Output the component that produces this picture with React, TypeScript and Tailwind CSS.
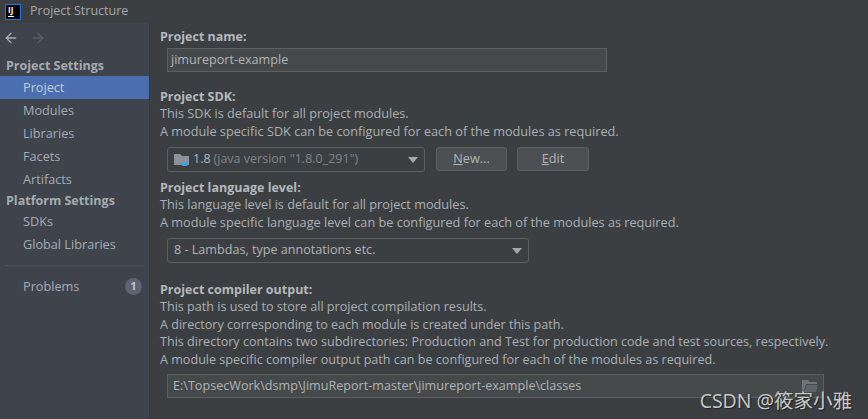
import { ArrowLeft, ArrowRight } from 'lucide-react';

const font = { fontFamily: '"Open Sans", "Noto Sans CJK SC", sans-serif' };

function NavItem({ label, active }: { label: string; active?: boolean }) {
  return (
    <div className={`h-[23px] pl-[23px] flex items-center text-[12.7px] leading-none ${active ? 'bg-[#4b6eaf] text-[#c4ccd6]' : 'text-[#a4acb5]'}`}>
      {label}
    </div>
  );
}

function Heading({ children }: { children: string }) {
  return <div className="h-[17px] leading-[17px] text-[12.5px] font-bold text-[#b4b8bc]">{children}</div>;
}

function Line({ children }: { children: string }) {
  return <div className="h-[17.5px] leading-[17.5px] text-[12.7px] text-[#a9b0b6] whitespace-nowrap">{children}</div>;
}

function SmallLine({ children }: { children: string }) {
  return <div className="h-[17.5px] leading-[17.5px] text-[12.58px] text-[#a9b0b6] whitespace-nowrap">{children}</div>;
}

function Caret() {
  return <div className="w-0 h-0 border-x-[5px] border-x-transparent border-t-[6px] border-t-[#a5a8aa]" />;
}

export default function App() {
  return (
    <div style={font} className="w-[868px] h-[419px] overflow-hidden bg-[#3c3f41] flex flex-col relative">
      {/* Title bar */}
      <div className="h-[23px] shrink-0 flex items-center pl-[5px] gap-[9px]">
        <div className="w-[16px] h-[16px] bg-black border border-[#1a7ce0] relative">
          <span className="absolute left-[2px] top-[0px] text-[8px] font-bold leading-[9px] text-white">IJ</span>
          <div className="absolute left-[2px] bottom-[2px] w-[6px] h-[1px] bg-white" />
        </div>
        <span className="text-[12.5px] text-[#a3a7ab]">Project Structure</span>
      </div>

      <div className="flex-1 flex min-h-0">
        {/* Sidebar */}
        <div className="w-[150px] shrink-0 bg-[#3e434c] border-r border-[#35383a] flex flex-col">
          <div className="h-[30px] flex items-center pl-[3px] gap-[11px]">
            <ArrowLeft size={16} strokeWidth={2} className="text-[#a9adb0]" />
            <ArrowRight size={16} strokeWidth={2} className="text-[#5b5f62]" />
          </div>
          <div className="h-[23px] pt-[3px] pl-[6px] flex items-center text-[12.5px] font-bold text-[#a6abb0]">Project Settings</div>
          <NavItem label="Project" active />
          <NavItem label="Modules" />
          <NavItem label="Libraries" />
          <NavItem label="Facets" />
          <NavItem label="Artifacts" />
          <div className="h-[19px] pt-[1px] pl-[6px] flex items-center text-[12.5px] font-bold text-[#a6abb0]">Platform Settings</div>
          <NavItem label="SDKs" />
          <NavItem label="Global Libraries" />
          <div className="mx-[5px] mt-[9px] mb-[9px] border-t border-[#4c5056]" />
          <div className="h-[23px] pl-[23px] pr-[7px] flex items-center justify-between text-[12.7px] text-[#a4acb5]">
            <span>Problems</span>
            <span className="w-[17px] h-[17px] rounded-full bg-[#5d6374] text-[#c2c5c9] text-[11px] font-bold flex items-center justify-center">1</span>
          </div>
        </div>

        {/* Main panel */}
        <div className="flex-1 pl-[10px] pt-[5px] min-w-0">
          <Heading>Project name:</Heading>
          <div className="mt-[3px] ml-[7px] w-[440px] h-[24px] bg-[#45494a] border border-[#5e6060] px-[3px] flex items-center text-[12.6px] text-[#b0b4b8]">
            jimureport-example
          </div>

          <div className="mt-[16px]"><Heading>Project SDK:</Heading></div>
          <Line>This SDK is default for all project modules.</Line>
          <Line>A module specific SDK can be configured for each of the modules as required.</Line>
          <div className="mt-[7px] ml-[7px] flex items-start">
            <div className="w-[258px] h-[25px] bg-[#3c3f41] border border-[#5e6060] rounded-[3px] flex items-center pl-[6px] pr-[6px] text-[12.5px]">
              <svg width="16" height="15" viewBox="0 0 16 15" className="shrink-0 mr-[3px]">
                <path d="M0 2h6l2 2h7v9H0z" fill="#8a939b" />
                <path d="M7 10h7v2a2 2 0 0 1-2 2H9a2 2 0 0 1-2-2z" fill="#3e9fdc" />
              </svg>
              <span className="text-[#a9b7c6]">1.8</span>
              <span className="ml-[3px] text-[#7f8588] flex-1">(java version "1.8.0_291")</span>
              <Caret />
            </div>
            <div className="ml-[11px] w-[71px] h-[24px] rounded-[3px] bg-[#4c5052] border border-[#5e6060] flex items-center justify-center text-[12.7px] text-[#b0b4b8]">
              <span><u>N</u>ew...</span>
            </div>
            <div className="ml-[10px] w-[72px] h-[24px] rounded-[3px] bg-[#4c5052] border border-[#5e6060] flex items-center justify-center text-[12.7px] text-[#b0b4b8]">
              <span><u>E</u>dit</span>
            </div>
          </div>

          <div className="mt-[7px]"><Heading>Project language level:</Heading></div>
          <Line>This language level is default for all project modules.</Line>
          <Line>A module specific language level can be configured for each of the modules as required.</Line>
          <div className="mt-[7px] ml-[7px] w-[362px] h-[25px] border border-[#5e6060] rounded-[3px] flex items-center justify-between pl-[6px] pr-[6px] text-[12.6px] text-[#b0b4b8]">
            <span>8 - Lambdas, type annotations etc.</span>
            <Caret />
          </div>

          <div className="mt-[18px]"><Heading>Project compiler output:</Heading></div>
          <SmallLine>This path is used to store all project compilation results.</SmallLine>
          <SmallLine>A directory corresponding to each module is created under this path.</SmallLine>
          <SmallLine>This directory contains two subdirectories: Production and Test for production code and test sources, respectively.</SmallLine>
          <SmallLine>A module specific compiler output path can be configured for each of the modules as required.</SmallLine>
          <div className="mt-[6px] ml-[7px] w-[657px] h-[24px] bg-[#45494a] border border-[#5e6060] pl-[5px] pr-[5px] flex items-center justify-between text-[12.6px] text-[#b0b4b8]">
            <span>E:\TopsecWork\dsmp\JimuReport-master\jimureport-example\classes</span>
            <svg width="16" height="14" viewBox="0 0 16 14" className="shrink-0">
              <path d="M0 1h6l1.5 2H15v2H4L1.500 12H0z" fill="#6f7477" />
              <path d="M4.500 6H16l-2 7H2z" fill="#5f6467" />
            </svg>
          </div>
        </div>
      </div>

      {/* Watermark */}
      <div className="absolute right-[16px] bottom-[6px] text-[19.5px] leading-[24px] text-[#c8cacb] [text-shadow:1px_1px_1px_#222]">
        CSDN @筱家小雅
      </div>
    </div>
  );
}
